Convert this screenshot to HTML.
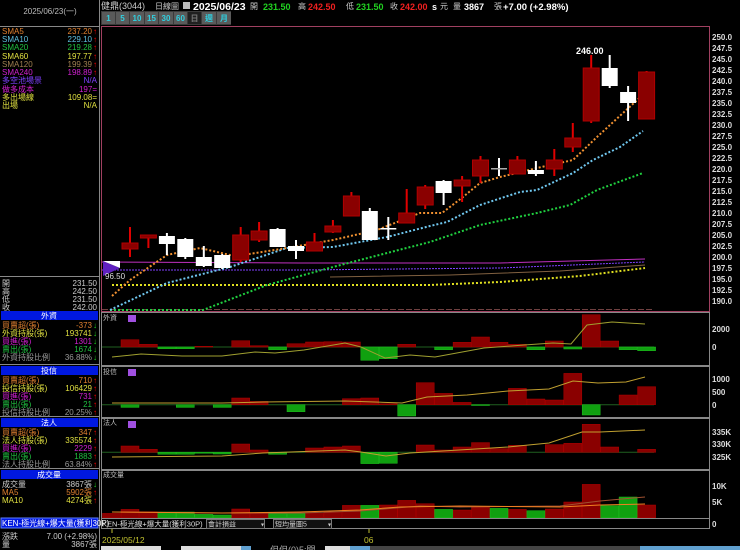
<!DOCTYPE html>
<html><head><meta charset="utf-8"><style>
html,body{margin:0;padding:0;background:#000;width:740px;height:550px;overflow:hidden}
svg{display:block}
text{font-family:"Liberation Sans","Noto Sans CJK TC",sans-serif}
.s{font-size:8px}
</style></head><body>
<svg width="740" height="550" viewBox="0 0 740 550" xmlns="http://www.w3.org/2000/svg">
<rect width="740" height="550" fill="#000"/>
<!-- left panel -->
<line x1="99.5" y1="0" x2="99.5" y2="550" stroke="#888" stroke-width="1"/>
<text x="50" y="14" class="s" fill="#bbb" text-anchor="middle">2025/06/23(一)</text>
<line x1="0" y1="26.5" x2="99" y2="26.5" stroke="#888"/>
<g class="s">
<text x="2" y="34" fill="#e08030">SMA5</text><text x="92" y="34" fill="#e08030" text-anchor="end">237.20</text>
<text x="2" y="42" fill="#60c0e0">SMA10</text><text x="92" y="42" fill="#60c0e0" text-anchor="end">229.10</text>
<text x="2" y="50" fill="#20c040">SMA20</text><text x="92" y="50" fill="#20c040" text-anchor="end">219.28</text>
<text x="2" y="59" fill="#e0e040">SMA60</text><text x="92" y="59" fill="#e0e040" text-anchor="end">197.77</text>
<text x="2" y="67" fill="#a08050">SMA120</text><text x="92" y="67" fill="#a08050" text-anchor="end">199.39</text>
<text x="2" y="75" fill="#d020d0">SMA240</text><text x="92" y="75" fill="#d020d0" text-anchor="end">198.89</text>
<text x="2" y="83" fill="#8040ff">多空池場景</text><text x="97" y="83" fill="#8040ff" text-anchor="end">N/A</text>
<text x="2" y="92" fill="#d020d0">做多成本</text><text x="97" y="92" fill="#d020d0" text-anchor="end">197=</text>
<text x="2" y="100" fill="#e0e040">多出場線</text><text x="97" y="100" fill="#e0e040" text-anchor="end">109.08=</text>
<text x="2" y="108" fill="#e0e040">出場</text><text x="97" y="108" fill="#e0e040" text-anchor="end">N/A</text>
</g>
<g fill="#f00" class="s"><text x="93" y="34">↑</text><text x="93" y="42">↑</text><text x="93" y="50">↑</text><text x="93" y="59">↑</text><text x="93" y="67">↑</text><text x="93" y="75">↑</text></g>
<line x1="0" y1="276.5" x2="99" y2="276.5" stroke="#888"/>
<g class="s" fill="#ccc">
<text x="2" y="286">開</text><text x="97" y="286" text-anchor="end">231.50</text>
<text x="2" y="294">高</text><text x="97" y="294" text-anchor="end">242.50</text>
<text x="2" y="302">低</text><text x="97" y="302" text-anchor="end">231.50</text>
<text x="2" y="310">收</text><text x="97" y="310" text-anchor="end">242.00</text>
</g>
<!-- 外資 block -->
<rect x="1" y="311" width="97" height="9" fill="#0018e0"/>
<text x="49" y="318.5" class="s" fill="#fff" text-anchor="middle">外資</text>
<g class="s">
<text x="2" y="328" fill="#e08030">買賣超(張)</text><text x="92" y="328" fill="#e08030" text-anchor="end">-373</text>
<text x="2" y="336" fill="#e0e040">外資持股(張)</text><text x="92" y="336" fill="#e0e040" text-anchor="end">193741</text>
<text x="2" y="344" fill="#d020d0">買進(張)</text><text x="92" y="344" fill="#d020d0" text-anchor="end">1301</text>
<text x="2" y="352" fill="#20c040">賣出(張)</text><text x="92" y="352" fill="#20c040" text-anchor="end">1674</text>
<text x="2" y="360" fill="#999">外資持股比例</text><text x="92" y="360" fill="#999" text-anchor="end">36.88%</text>
</g>
<g fill="#20d020" class="s"><text x="93" y="328">↓</text><text x="93" y="336">↓</text><text x="93" y="344">↓</text><text x="93" y="352">↓</text><text x="93" y="360">↓</text></g>
<line x1="0" y1="364.5" x2="99" y2="364.5" stroke="#888"/>
<!-- 投信 -->
<rect x="1" y="366" width="97" height="9" fill="#0018e0"/>
<text x="49" y="373.5" class="s" fill="#fff" text-anchor="middle">投信</text>
<g class="s">
<text x="2" y="383" fill="#e08030">買賣超(張)</text><text x="92" y="383" fill="#e08030" text-anchor="end">710</text>
<text x="2" y="391" fill="#e0e040">投信持股(張)</text><text x="92" y="391" fill="#e0e040" text-anchor="end">106429</text>
<text x="2" y="399" fill="#d020d0">買進(張)</text><text x="92" y="399" fill="#d020d0" text-anchor="end">731</text>
<text x="2" y="407" fill="#20c040">賣出(張)</text><text x="92" y="407" fill="#20c040" text-anchor="end">21</text>
<text x="2" y="415" fill="#999">投信持股比例</text><text x="92" y="415" fill="#999" text-anchor="end">20.25%</text>
</g>
<g fill="#f00" class="s"><text x="93" y="383">↑</text><text x="93" y="391">↑</text><text x="93" y="399">↑</text><text x="93" y="407">↑</text><text x="93" y="415">↑</text></g>
<line x1="0" y1="416.5" x2="99" y2="416.5" stroke="#888"/>
<!-- 法人 -->
<rect x="1" y="418" width="97" height="9" fill="#0018e0"/>
<text x="49" y="425.5" class="s" fill="#fff" text-anchor="middle">法人</text>
<g class="s">
<text x="2" y="435" fill="#e08030">買賣超(張)</text><text x="92" y="435" fill="#e08030" text-anchor="end">347</text>
<text x="2" y="443" fill="#e0e040">法人持股(張)</text><text x="92" y="443" fill="#e0e040" text-anchor="end">335574</text>
<text x="2" y="451" fill="#d020d0">買進(張)</text><text x="92" y="451" fill="#d020d0" text-anchor="end">2229</text>
<text x="2" y="459" fill="#20c040">賣出(張)</text><text x="92" y="459" fill="#20c040" text-anchor="end">1883</text>
<text x="2" y="467" fill="#999">法人持股比例</text><text x="92" y="467" fill="#999" text-anchor="end">63.84%</text>
</g>
<g fill="#f00" class="s"><text x="93" y="435">↑</text><text x="93" y="443">↑</text><text x="93" y="451">↑</text><text x="93" y="459">↑</text><text x="93" y="467">↑</text></g>
<line x1="0" y1="468.5" x2="99" y2="468.5" stroke="#888"/>
<!-- 成交量 -->
<rect x="1" y="470" width="97" height="9" fill="#0018e0"/>
<text x="49" y="477.5" class="s" fill="#fff" text-anchor="middle">成交量</text>
<g class="s">
<text x="2" y="487" fill="#ccc">成交量</text><text x="92" y="487" fill="#ccc" text-anchor="end">3867張</text>
<text x="2" y="495" fill="#e08030">MA5</text><text x="92" y="495" fill="#e08030" text-anchor="end">5902張</text>
<text x="2" y="503" fill="#e0e040">MA10</text><text x="92" y="503" fill="#e0e040" text-anchor="end">4274張</text>
</g>
<g class="s"><text x="93" y="487" fill="#20d020">↓</text><text x="93" y="495" fill="#f00">↑</text><text x="93" y="503" fill="#f00">↑</text></g>
<rect x="1" y="518" width="97" height="10" fill="#0018e0" stroke="#6080ff"/>
<text x="2" y="526" class="s" fill="#fff">KEN-極光線+爆大量(獲利30P)</text>
<g class="s" fill="#ccc">
<text x="2" y="539">漲跌</text><text x="97" y="539" text-anchor="end">7.00 (+2.98%)</text>
<text x="2" y="547">量</text><text x="97" y="547" text-anchor="end">3867張</text>
</g>

<!-- header -->
<text x="101" y="9" font-size="9" fill="#ccc">健鼎(3044)</text>
<text x="155" y="9" font-size="8" fill="#ccc">日線圖</text>
<rect x="183" y="2" width="7" height="7" fill="#bbb"/>
<text x="193" y="10" font-size="10.5" font-weight="bold" fill="#fff">2025/06/23</text>
<text x="250" y="9" font-size="8" fill="#ccc">開</text>
<text x="263" y="10" font-size="9" font-weight="bold" fill="#20d020">231.50</text>
<text x="298" y="9" font-size="8" fill="#ccc">高</text>
<text x="308" y="10" font-size="9" font-weight="bold" fill="#f02020">242.50</text>
<text x="346" y="9" font-size="8" fill="#ccc">低</text>
<text x="356" y="10" font-size="9" font-weight="bold" fill="#20d020">231.50</text>
<text x="390" y="9" font-size="8" fill="#ccc">收</text>
<text x="400" y="10" font-size="9" font-weight="bold" fill="#f02020">242.00</text>
<text x="432" y="10" font-size="9" font-weight="bold" fill="#fff">s</text>
<text x="440" y="9" font-size="8" fill="#ccc">元</text>
<text x="453" y="9" font-size="8" fill="#ccc">量</text>
<text x="464" y="10" font-size="9" font-weight="bold" fill="#fff">3867</text>
<text x="494" y="9" font-size="8" fill="#ccc">張</text>
<text x="503" y="10" font-size="9.5" font-weight="bold" fill="#fff">+7.00 (+2.98%)</text>
<!-- buttons -->
<rect x="101" y="11" width="130" height="14" fill="#3a3a3a"/>
<g fill="#5a5a5a">
<rect x="102" y="12" width="13" height="12"/><rect x="116" y="12" width="13" height="12"/><rect x="130" y="12" width="14" height="12"/><rect x="145" y="12" width="13" height="12"/><rect x="159" y="12" width="14" height="12"/><rect x="174" y="12" width="13" height="12"/><rect x="202" y="12" width="14" height="12"/><rect x="217" y="12" width="14" height="12"/>
</g>
<rect x="188" y="12" width="13" height="12" fill="#202020"/>
<g font-size="8" font-weight="bold" fill="#30d0e0" text-anchor="middle">
<text x="108.5" y="21">1</text><text x="122.5" y="21">5</text><text x="137" y="21">10</text><text x="151.5" y="21">15</text><text x="166" y="21">30</text><text x="180.5" y="21">60</text><text x="194.5" y="21" fill="#777">日</text><text x="209" y="21">週</text><text x="224" y="21">月</text>
</g>

<!-- main chart frame -->
<rect x="101.5" y="26.5" width="608" height="285" fill="none" stroke="#a04060"/>
<line x1="102" y1="309.5" x2="652" y2="309.5" stroke="#704040" stroke-dasharray="6,2"/>
<g font-size="8" fill="#ddd" font-weight="bold">
<text x="712" y="40">250.0</text><text x="712" y="51">247.5</text><text x="712" y="62">245.0</text><text x="712" y="73">242.5</text><text x="712" y="84">240.0</text><text x="712" y="95">237.5</text><text x="712" y="106">235.0</text><text x="712" y="117">232.5</text><text x="712" y="128">230.0</text><text x="712" y="139">227.5</text><text x="712" y="150">225.0</text><text x="712" y="161">222.5</text><text x="712" y="172">220.0</text><text x="712" y="183">217.5</text><text x="712" y="194">215.0</text><text x="712" y="205">212.5</text><text x="712" y="216">210.0</text><text x="712" y="227">207.5</text><text x="712" y="238">205.0</text><text x="712" y="249">202.5</text><text x="712" y="260">200.0</text><text x="712" y="271">197.5</text><text x="712" y="282">195.0</text><text x="712" y="293">192.5</text><text x="712" y="304">190.0</text>
</g>
<polyline points="102,262 300,263 500,263 645,259" fill="none" stroke="#c030c0" stroke-width="1"/>
<polyline points="102,270 300,270 500,268 645,262" fill="none" stroke="#8040ff" stroke-width="1" stroke-dasharray="2,1"/>
<polyline points="330,277 450,275 560,271 645,265" fill="none" stroke="#806040" stroke-width="1"/>
<polyline points="112,285 430,285 500,282 580,276 645,268" fill="none" stroke="#e0e020" stroke-width="2" stroke-dasharray="2,2"/>
<polyline points="110,310 203,310 267,285 333,267 387,253 430,242 480,225 537,213 570,205 597,190 643,173" fill="none" stroke="#20d040" stroke-width="2" stroke-dasharray="2,2"/>
<polyline points="110,310 167,283 230,267 287,248 333,247 387,237 430,226 447,222 480,205 520,192 537,190 573,173 593,160 620,147 643,131" fill="none" stroke="#70c8f0" stroke-width="2" stroke-dasharray="2,2"/>
<polyline points="112,296 130,280 167,255 200,248 230,255 243,255 287,248 333,240 377,230 420,213 442,213 463,197 480,183 500,177 517,173 537,168 573,160 597,137 623,113 645,93" fill="none" stroke="#f09030" stroke-width="2" stroke-dasharray="2,2"/>
<g stroke="#e00000" stroke-width="2">
<line x1="130" y1="227" x2="130" y2="257"/><line x1="148.4" y1="235" x2="148.4" y2="248"/>
<line x1="240.7" y1="227" x2="240.7" y2="262"/><line x1="259.1" y1="222" x2="259.1" y2="242"/>
<line x1="314.5" y1="233" x2="314.5" y2="251"/><line x1="332.9" y1="220" x2="332.9" y2="233"/>
<line x1="351.4" y1="192" x2="351.4" y2="216"/><line x1="406.7" y1="189" x2="406.7" y2="223"/>
<line x1="425.2" y1="185" x2="425.2" y2="209"/><line x1="462.1" y1="176" x2="462.1" y2="202"/>
<line x1="480.5" y1="156" x2="480.5" y2="183"/><line x1="517.4" y1="156" x2="517.4" y2="174"/>
<line x1="554.3" y1="149" x2="554.3" y2="176"/><line x1="572.8" y1="123" x2="572.8" y2="152"/>
<line x1="591.2" y1="55" x2="591.2" y2="123"/><line x1="646.6" y1="71" x2="646.6" y2="119"/>
</g>
<g stroke="#fff" stroke-width="2">
<line x1="166.9" y1="233" x2="166.9" y2="255"/><line x1="185.3" y1="238" x2="185.3" y2="259"/>
<line x1="203.8" y1="246" x2="203.8" y2="267"/><line x1="222.2" y1="254" x2="222.2" y2="269"/>
<line x1="277.6" y1="228" x2="277.6" y2="247"/><line x1="296" y1="240" x2="296" y2="259"/>
<line x1="369.8" y1="208" x2="369.8" y2="240"/><line x1="388.3" y1="217" x2="388.3" y2="240"/>
<line x1="443.6" y1="180" x2="443.6" y2="205"/><line x1="499" y1="158" x2="499" y2="176"/>
<line x1="535.9" y1="161" x2="535.9" y2="176"/><line x1="609.7" y1="55" x2="609.7" y2="88"/>
<line x1="628.1" y1="86" x2="628.1" y2="121"/>
</g>
<g fill="#8a0000" stroke="#b00000" stroke-width="1">
<rect x="122" y="243" width="16" height="6"/><rect x="140.4" y="235" width="16" height="3"/>
<rect x="232.7" y="235" width="16" height="25"/><rect x="251.1" y="231" width="16" height="9"/>
<rect x="306.5" y="242" width="16" height="9"/><rect x="324.9" y="226" width="16" height="6"/>
<rect x="343.4" y="196" width="16" height="20"/><rect x="398.7" y="213" width="16" height="10"/>
<rect x="417.2" y="187" width="16" height="18"/><rect x="454.1" y="180" width="16" height="6"/>
<rect x="472.5" y="160" width="16" height="16"/><rect x="509.4" y="160" width="16" height="14"/>
<rect x="546.3" y="160" width="16" height="9"/><rect x="564.8" y="138" width="16" height="9"/>
<rect x="583.2" y="68" width="16" height="53"/><rect x="638.6" y="72" width="16" height="47"/>
</g>
<g fill="#fff">
<rect x="158.9" y="236" width="16" height="8"/><rect x="177.3" y="239" width="16" height="18"/>
<rect x="195.8" y="257" width="16" height="9"/><rect x="214.2" y="255" width="16" height="13"/>
<rect x="269.6" y="229" width="16" height="18"/><rect x="288" y="246" width="16" height="5"/>
<rect x="361.8" y="211" width="16" height="29"/><rect x="380.3" y="228" width="16" height="1.5"/>
<rect x="435.6" y="181" width="16" height="12"/><rect x="491" y="168" width="16" height="1.5" fill="#aaa"/>
<rect x="527.9" y="170" width="16" height="4"/><rect x="601.7" y="68" width="16" height="18"/>
<rect x="620.1" y="92" width="16" height="11"/>
</g>
<text x="576" y="54" font-size="9" font-weight="bold" fill="#fff">246.00</text>
<polygon points="103,261 120,268 103,276" fill="#6020c0"/>
<polygon points="103,261 120,261 120,268" fill="#fff"/>
<text x="105" y="279" font-size="8" fill="#ddd">96.50</text>

<g fill="none" stroke="#888">
<rect x="101.5" y="312.5" width="608" height="53"/>
<rect x="101.5" y="366.5" width="608" height="51"/>
<rect x="101.5" y="418.5" width="608" height="51"/>
<rect x="101.5" y="470.5" width="608" height="48"/>
<rect x="101.5" y="518.5" width="608" height="10"/>
</g>
<g font-size="7" fill="#bbb"><text x="103" y="320">外資</text><text x="103" y="374">投信</text><text x="103" y="425">法人</text><text x="103" y="477">成交量</text></g>
<g fill="#a050e0"><rect x="128" y="315" width="8" height="7"/><rect x="128" y="369" width="8" height="7"/><rect x="128" y="421" width="8" height="7"/></g>
<g font-size="8" font-weight="bold" fill="#ddd">
<text x="712" y="332">2000</text><text x="712" y="350">0</text>
<text x="712" y="382">1000</text><text x="712" y="395">500</text><text x="712" y="408">0</text>
<text x="712" y="435">335K</text><text x="712" y="447">330K</text><text x="712" y="460">325K</text>
<text x="712" y="489">10K</text><text x="712" y="505">5K</text><text x="712" y="527">0</text>
</g>
<line x1="102" y1="347" x2="654" y2="347" stroke="#206020"/>
<g fill="#8a0000" stroke="#b00000" stroke-width=".5">
<rect x="121" y="339.7" width="18" height="7.3"/><rect x="139.4" y="344.3" width="18" height="2.7"/><rect x="194.8" y="346.3" width="18" height=".7"/>
<rect x="231.7" y="340.7" width="18" height="6.3"/><rect x="250.1" y="345.7" width="18" height="1.3"/><rect x="287" y="343.7" width="18" height="3.3"/>
<rect x="305.5" y="342" width="18" height="5"/><rect x="323.9" y="341.7" width="18" height="5.3"/><rect x="342.4" y="342" width="18" height="5"/>
<rect x="397.7" y="344.3" width="18" height="2.7"/><rect x="453.1" y="342.3" width="18" height="4.7"/><rect x="471.5" y="337" width="18" height="10"/>
<rect x="490" y="342.3" width="18" height="4.7"/><rect x="508.4" y="344.3" width="18" height="2.7"/><rect x="545.3" y="341" width="18" height="6"/>
<rect x="582.2" y="314.7" width="18" height="32.3"/><rect x="600.7" y="341" width="18" height="6"/>
</g>
<g fill="#10a010" stroke="#20c020" stroke-width=".5">
<rect x="157.9" y="347" width="18" height="1.7"/><rect x="176.3" y="347" width="18" height="1.7"/><rect x="268.6" y="347" width="18" height="2.7"/>
<rect x="360.8" y="347" width="18" height="13.3"/><rect x="379.3" y="347" width="18" height="11.7"/><rect x="434.6" y="347" width="18" height="2.7"/>
<rect x="526.9" y="347" width="18" height="2.7"/><rect x="563.8" y="347" width="18" height="2"/><rect x="619.1" y="347" width="18" height="2.7"/><rect x="637.6" y="347" width="18" height="3.7"/>
</g>
<polyline points="112,357 141,354 182,356 222,356 255,352 275,353 304,350 345,343 361,347 385,358 410,355 435,357 484,348 524,345 553,343 571,344 587,325 612,322 645,324" fill="none" stroke="#a0a030" stroke-width="1"/>
<line x1="102" y1="404.7" x2="654" y2="404.7" stroke="#206020"/>
<g fill="#8a0000" stroke="#b00000" stroke-width=".5">
<rect x="231.7" y="398" width="18" height="6.7"/><rect x="250.1" y="401.4" width="18" height="3.3"/><rect x="342.4" y="398.7" width="18" height="6"/>
<rect x="360.8" y="398" width="18" height="6.7"/><rect x="379.3" y="403.7" width="18" height="1"/><rect x="416.2" y="382.7" width="18" height="22"/>
<rect x="434.6" y="393.4" width="18" height="11.3"/><rect x="453.1" y="402.4" width="18" height="2.3"/><rect x="508.4" y="388.4" width="18" height="16.3"/>
<rect x="526.9" y="399" width="18" height="5.7"/><rect x="545.3" y="400" width="18" height="4.7"/><rect x="563.8" y="373.4" width="18" height="31.3"/>
<rect x="619.1" y="395" width="18" height="9.7"/><rect x="637.6" y="386.7" width="18" height="18"/>
</g>
<g fill="#10a010" stroke="#20c020" stroke-width=".5">
<rect x="121" y="404.7" width="18" height="2.7"/><rect x="176.3" y="404.7" width="18" height="2.7"/><rect x="213.2" y="404.7" width="18" height="2.7"/>
<rect x="287" y="404.7" width="18" height="7"/><rect x="397.7" y="404.7" width="18" height="11.3"/><rect x="471.5" y="404.7" width="18" height=".8"/>
<rect x="582.2" y="404.7" width="18" height="10.3"/>
</g>
<polyline points="112,403 222,403 263,402 345,401 402,403 427,397 467,395 508,391 549,389 573,381 598,383 626,382 645,377" fill="none" stroke="#c0a030" stroke-width="1"/>
<line x1="102" y1="452.3" x2="654" y2="452.3" stroke="#206020"/>
<g fill="#8a0000" stroke="#b00000" stroke-width=".5">
<rect x="121" y="446" width="18" height="6.3"/><rect x="139.4" y="449.3" width="18" height="3"/><rect x="231.7" y="444" width="18" height="8.3"/>
<rect x="250.1" y="450" width="18" height="2.3"/><rect x="305.5" y="448" width="18" height="4.3"/><rect x="323.9" y="447" width="18" height="5.3"/>
<rect x="342.4" y="446" width="18" height="6.3"/><rect x="416.2" y="445" width="18" height="7.3"/><rect x="434.6" y="450" width="18" height="2.3"/>
<rect x="453.1" y="447" width="18" height="5.3"/><rect x="471.5" y="442.6" width="18" height="9.7"/><rect x="490" y="448.6" width="18" height="3.7"/>
<rect x="508.4" y="445.3" width="18" height="7"/><rect x="545.3" y="444.6" width="18" height="7.7"/><rect x="563.8" y="443.3" width="18" height="9"/>
<rect x="582.2" y="424.3" width="18" height="28"/><rect x="600.7" y="447" width="18" height="5.3"/><rect x="637.6" y="449.3" width="18" height="3"/>
</g>
<g fill="#10a010" stroke="#20c020" stroke-width=".5">
<rect x="157.9" y="452.3" width="18" height="2"/><rect x="176.3" y="452.3" width="18" height="2"/><rect x="194.8" y="452.3" width="18" height="1"/>
<rect x="213.2" y="452.3" width="18" height="1.7"/><rect x="268.6" y="452.3" width="18" height="2"/><rect x="360.8" y="452.3" width="18" height="11.3"/>
<rect x="379.3" y="452.3" width="18" height="11"/>
</g>
<polyline points="112,457 222,456 263,453 345,450 361,452 386,456 410,453 508,447 549,443 582,432 600,432 645,430" fill="none" stroke="#c0a030" stroke-width="1"/>
<g fill="#8a0000" stroke="#b00000" stroke-width=".5">
<rect x="102.5" y="513.4" width="18" height="4.3"/><rect x="121" y="509.4" width="18" height="8.3"/><rect x="139.4" y="511.7" width="18" height="6"/>
<rect x="231.7" y="509" width="18" height="8.7"/><rect x="250.1" y="513.4" width="18" height="4.3"/><rect x="305.5" y="513.4" width="18" height="4.3"/>
<rect x="323.9" y="512.4" width="18" height="5.3"/><rect x="342.4" y="505.4" width="18" height="12.3"/><rect x="379.3" y="505" width="18" height="12.7"/>
<rect x="397.7" y="500.4" width="18" height="17.3"/><rect x="416.2" y="503.7" width="18" height="14"/><rect x="453.1" y="510" width="18" height="7.7"/>
<rect x="471.5" y="507.4" width="18" height="10.3"/><rect x="508.4" y="509.4" width="18" height="8.3"/><rect x="545.3" y="509" width="18" height="8.7"/>
<rect x="563.8" y="502" width="18" height="15.7"/><rect x="582.2" y="484.4" width="18" height="33.3"/><rect x="637.6" y="505" width="18" height="12.7"/>
</g>
<g fill="#10a010" stroke="#20c020" stroke-width=".5">
<rect x="157.9" y="512" width="18" height="5.7"/><rect x="176.3" y="512" width="18" height="5.7"/><rect x="194.8" y="514.4" width="18" height="3.3"/>
<rect x="213.2" y="515" width="18" height="2.7"/><rect x="268.6" y="513.7" width="18" height="4"/><rect x="287" y="513.4" width="18" height="4.3"/>
<rect x="360.8" y="505.4" width="18" height="12.3"/><rect x="434.6" y="509.4" width="18" height="8.3"/><rect x="490" y="508.4" width="18" height="9.3"/>
<rect x="526.9" y="510.7" width="18" height="7"/><rect x="600.7" y="505.7" width="18" height="12"/><rect x="619.1" y="497" width="18" height="20.7"/>
</g>
<polyline points="112,512 222,513 300,513 360,511 420,506 460,507 560,506 600,501 645,497" fill="none" stroke="#a05030" stroke-width="1"/>
<polyline points="112,512 222,513 300,512 360,510 400,507 460,506 560,507 600,505 645,504" fill="none" stroke="#f08020" stroke-width="1"/>
<text x="102" y="526.5" font-size="7.5" fill="#ddd">KEN-極光線+爆大量(獲利30P)</text>
<rect x="206.5" y="519.5" width="58" height="9" fill="#111" stroke="#777"/><text x="208" y="526.5" font-size="7" fill="#ccc">會計損益</text><text x="261" y="526.5" font-size="6" fill="#ccc">▾</text>
<rect x="273.5" y="519.5" width="58" height="9" fill="#111" stroke="#777"/><text x="275" y="526.5" font-size="7" fill="#ccc">短均量圖5</text><text x="328" y="526.5" font-size="6" fill="#ccc">▾</text>
<line x1="112" y1="529" x2="112" y2="533" stroke="#c0c030"/>
<line x1="369" y1="529" x2="369" y2="533" stroke="#c0c030"/>
<text x="102" y="543" font-size="8.5" fill="#c0c030">2025/05/12</text>
<text x="364" y="543" font-size="8.5" fill="#c0c030">06</text>
<rect x="101" y="546" width="60" height="4" fill="#ddd"/>
<rect x="181" y="546" width="60" height="4" fill="#ddd"/>
<rect x="241" y="546" width="10" height="4" fill="#60a0d0"/>
<text x="270" y="553" font-size="9" fill="#aaa">但但(0)5:開</text>
<rect x="325" y="546" width="25" height="4" fill="#ddd"/>
<rect x="350" y="546" width="20" height="4" fill="#60a0d0"/>
<rect x="370" y="546" width="280" height="4" fill="#444"/>
<rect x="640" y="546" width="100" height="4" fill="#60a0d0"/>
</svg>
</body></html>
